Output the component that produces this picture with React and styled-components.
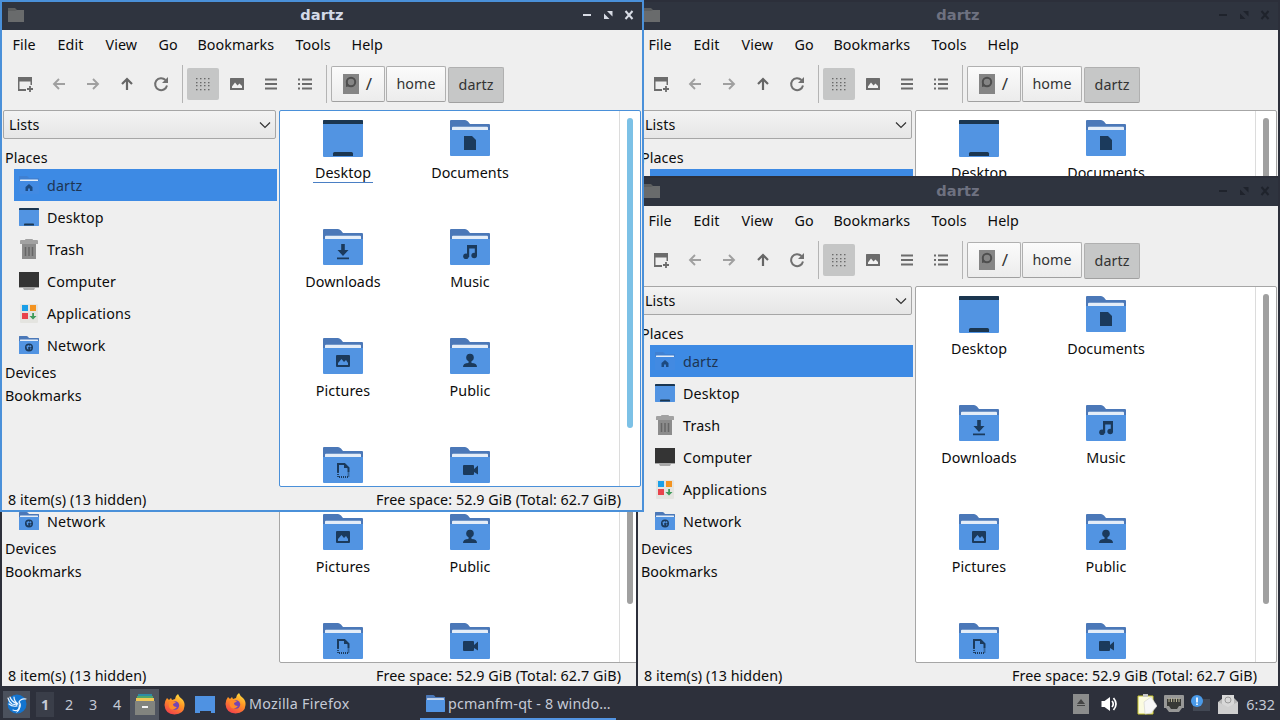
import React from "react";
import styled, { createGlobalStyle } from "styled-components";

const menus = [
  { name: "File", width: 45 },
  { name: "Edit", width: 48 },
  { name: "View", width: 53 },
  { name: "Go", width: 39 },
  { name: "Bookmarks", width: 98 },
  { name: "Tools", width: 56 },
  { name: "Help", width: 50 },
];

const places = ["dartz", "Desktop", "Trash", "Computer", "Applications", "Network"];

// the last row is scrolled half out of view, only its icons are reached
const files = [
  { icon: "Desktop", label: "Desktop" },
  { icon: "Documents", label: "Documents" },
  { icon: "Downloads", label: "Downloads" },
  { icon: "Music", label: "Music" },
  { icon: "Pictures", label: "Pictures" },
  { icon: "Public", label: "Public" },
  { icon: "Templates" },
  { icon: "Videos" },
];

const windows = [
  { id: 1, x: 636, y: 0 },
  { id: 2, x: 0, y: 176 },
  { id: 3, x: 636, y: 176 },
  { id: 4, x: 0, y: 0, active: true },
];

const App = () => {
  return (
    <Screen>
      <GlobalStyle />
      {windows.map((win) => (
        <FileWindow key={win.id} {...win} />
      ))}
      <Taskbar />
    </Screen>
  );
};

const FileWindow = ({ x, y, active }) => (
  <WindowFrame $x={x} $y={y} $active={active}>
    <TitleBar>
      <TitleFolder />
      <Title $active={active}>dartz</Title>
      <WindowButtons active={active} />
    </TitleBar>
    <MenuBar>
      {menus.map((menu) => (
        <MenuItem key={menu.name} $width={menu.width}>
          {menu.name}
        </MenuItem>
      ))}
    </MenuBar>
    <Toolbar>
      {["newtab", "back", "forward", "up", "reload"].map((name) => (
        <ToolButton key={name}>
          <ToolIcon name={name} />
        </ToolButton>
      ))}
      <Separator />
      {["grid", "image", "compact", "list"].map((name) => (
        <ToolButton key={name} $checked={name === "grid"}>
          <ToolIcon name={name} />
        </ToolButton>
      ))}
      <Separator />
      <PathBar>
        <PathButton $width={54}>
          <DriveIcon />
          <Slash>/</Slash>
        </PathButton>
        <PathButton $width={60}>home</PathButton>
        <PathButton $width={56} $checked>
          dartz
        </PathButton>
      </PathBar>
    </Toolbar>
    <Body>
      <Sidebar>
        <Select>
          Lists
          <svg width="12" height="8" viewBox="0 0 12 8">
            <path d="M1 1.5l5 5 5-5" fill="none" stroke="#333" strokeWidth="1.2" />
          </svg>
        </Select>
        <Group $top={7}>Places</Group>
        {places.map((place) => (
          <Place key={place} $selected={place === "dartz"}>
            <PlaceIcon name={place} />
            {place}
          </Place>
        ))}
        <Group>Devices</Group>
        <Group>Bookmarks</Group>
      </Sidebar>
      <FileView $active={active}>
        <FileGrid>
          {files.map((file) => (
            <File key={file.icon}>
              <FileIcon name={file.icon} />
              {file.label && (
                <FileName $current={active && file.label === "Desktop"}>{file.label}</FileName>
              )}
            </File>
          ))}
        </FileGrid>
        <ScrollTrack>
          <ScrollThumb $active={active} />
        </ScrollTrack>
      </FileView>
    </Body>
    <StatusBar>
      <StatusText>8 item(s) (13 hidden)</StatusText>
      <StatusText>Free space: 52.9 GiB (Total: 62.7 GiB)</StatusText>
    </StatusBar>
  </WindowFrame>
);

const TitleFolder = () => (
  <svg width="16" height="14" viewBox="0 0 16 14">
    <path d="M0 0h7l2 2h7v12H0z" fill="#5c5e5f" />
    <path d="M0 3h7l2-1h7v12H0z" fill="#696b6c" />
  </svg>
);

const WindowButtons = ({ active }) => {
  const color = active ? "#d8dce5" : "#1f232c";
  return (
    <svg width="52" height="12" viewBox="0 0 52 12">
      <path d="M0 6h8" stroke={color} strokeWidth="2" />
      <path d="M24 2h5.500v5.500zM21 4.500l5.500 5.500H21z" fill={color} />
      <path d="M42.500 2l7 8M49.500 2l-7 8" stroke={color} strokeWidth="2" />
    </svg>
  );
};

const ToolIcon = ({ name }) => {
  const shapes = {
    newtab: (
      <>
        <path d="M1 1h14v8h-1.500V5.500h-11V13H9v2H1z" fill="#6c6c6c" />
        <path d="M13 10v6M10 13h6" stroke="#6c6c6c" strokeWidth="1.8" />
      </>
    ),
    back: <path d="M14 8H3M8 3L3 8l5 5" fill="none" stroke="#a0a0a0" strokeWidth="1.900" />,
    forward: <path d="M2 8h11M8 3l5 5-5 5" fill="none" stroke="#a0a0a0" strokeWidth="1.900" />,
    up: <path d="M8 14V3M3 8l5-5 5 5" fill="none" stroke="#666" strokeWidth="2.200" />,
    reload: (
      <>
        <path d="M12.500 4A6 6 0 1 0 14 9.500" fill="none" stroke="#707070" strokeWidth="2" />
        <path d="M15 1v6H9z" fill="#707070" />
      </>
    ),
    grid: (
      <g fill="#6a6a6a">
        {[2, 6, 9, 13].map((y) =>
          [1, 5, 9, 13].map((x) => <rect key={`${x}-${y}`} x={x} y={y} width="1.500" height="1.300" />)
        )}
      </g>
    ),
    image: (
      <>
        <rect x="1" y="2" width="14" height="12" rx="0.5" fill="#6c6c6c" />
        <path d="M3 12V10.500L6 6.500l2.500 3 2-2L13 10v2z" fill="#f2f2f2" />
      </>
    ),
    compact: <path d="M2 3.500h12M2 8h12M2 12.500h12" stroke="#6c6c6c" strokeWidth="2" />,
    list: <path d="M1 3.500h2M5 3.500h10M1 8h2M5 8h10M1 12.500h2M5 12.500h10" stroke="#6c6c6c" strokeWidth="1.800" />,
  };
  return (
    <svg width="16" height="16" viewBox="0 0 16 16">
      {shapes[name]}
    </svg>
  );
};

const DriveIcon = () => (
  <svg width="16" height="20" viewBox="0 0 16 20">
    <rect width="16" height="20" fill="#858585" />
    <circle cx="8" cy="8" r="4.200" fill="none" stroke="#4e4e4e" strokeWidth="2" />
    <path d="M3 8v5l4-1" fill="#4e4e4e" />
  </svg>
);

const glyphs = {
  Documents: <path d="M14 16h8l4 4v10H14z" />,
  Downloads: <path d="M18.200 15h3.600v6h3.700L20 27l-5.500-6h3.700zM14 28.500h12v1.800H14z" />,
  Music: (
    <>
      <path d="M17 16h10v11h-2.200v-7.500h-5.600V28H17z" />
      <circle cx="16" cy="27.200" r="2.800" />
      <circle cx="24.200" cy="26.500" r="2.800" />
    </>
  ),
  Pictures: (
    <path fillRule="evenodd" d="M14 17h12q1 0 1 1v10q0 1-1 1H14q-1 0-1-1V18q0-1 1-1zM15 27h10v-2l-2-3-2 2-2.500-3-3.500 4z" />
  ),
  Public: (
    <>
      <circle cx="20" cy="19.500" r="3.800" />
      <path d="M18.500 22h3v3q5.500 0 5.500 4H13q0-4 5.500-4z" />
    </>
  ),
  Templates: (
    <>
      <path d="M15 25v-8h6.500l4 4v4" fill="none" stroke="#1b3a5c" strokeWidth="2" />
      <path d="M21 16l5 5h-5z" />
      <path d="M15 25v5h10.500v-5" fill="none" stroke="#1b3a5c" strokeWidth="1.800" strokeDasharray="1 1" />
    </>
  ),
  Videos: <path d="M14 18h9q1 0 1 1v3l4-3.500v9L24 25v2q0 1-1 1h-9q-1 0-1-1v-8q0-1 1-1z" />,
  Network: (
    <>
      <circle cx="20" cy="23" r="8" />
      <path d="M15 20l5-2 1 3-3 2 1 4-3-1zM22 18l3 2-1 3-3-1zM22 25l3-1-2 4z" fill="#5294e2" />
    </>
  ),
  dartz: <path d="M20 16l7 6v8h-5v-5h-4v5h-5v-8z" />,
};

const Folder = ({ name, width = 40, height = 36 }) => (
  <svg width={width} height={height} viewBox="0 0 40 36" preserveAspectRatio="none">
    <path
      d="M1 0h14q1.500 0 3 1.500L20 4h19q1 0 1 1v12H0V1q0-1 1-1z"
      fill={name === "dartz" ? "#3f80d2" : "#4b78b8"}
    />
    <path d="M3 6.800h34q1 0 1 1V14H2V7.800q0-1 1-1z" fill="#e4edf8" />
    <path d="M0 10h40V35q0 1-1 1H1q-1 0-1-1z" fill={name === "dartz" ? "#428ae2" : "#5294e2"} />
    <g fill={name === "dartz" ? "#1d4a80" : "#1b3a5c"}>{glyphs[name]}</g>
  </svg>
);

const DesktopIcon = ({ width = 40, height = 37 }) => (
  <svg width={width} height={height} viewBox="0 0 40 37" preserveAspectRatio="none">
    <path d="M1 0h38q1 0 1 1v35q0 1-1 1H1q-1 0-1-1V1q0-1 1-1z" fill="#5294e2" />
    <path d="M1 0h38q1 0 1 1v3H0V1q0-1 1-1z" fill="#1b3650" />
    <path d="M10 36v-2.500q0-1.500 1.500-1.500h17q1.500 0 1.500 1.500V36z" fill="#1b3650" />
  </svg>
);

const FileIcon = ({ name }) => (name === "Desktop" ? <DesktopIcon /> : <Folder name={name} />);

const PlaceIcon = ({ name }) => {
  if (name === "dartz" || name === "Network") {
    return <Folder name={name} width={20} height={18} />;
  }
  if (name === "Desktop") {
    return <DesktopIcon width={20} height={18} />;
  }
  if (name === "Trash") {
    return (
      <svg width="20" height="20" viewBox="0 0 20 20">
        <path d="M2 1h4q0-1 1-1h6q1 0 1 1h4q1 0 1 1v3H1V2q0-1 1-1z" fill="#a2a2a2" />
        <path d="M3 5h14v15H3z" fill="#8c8c8c" />
        <path d="M6.500 8v9M10 8v9M13.500 8v9" stroke="#666" strokeWidth="1.500" />
      </svg>
    );
  }
  if (name === "Computer") {
    return (
      <svg width="20" height="18" viewBox="0 0 20 18">
        <path d="M0 14h20v2h-4l-1 2H5l-1-2H0z" fill="#a8a8a8" />
        <path d="M0 0h20v15H0z" fill="#343434" />
      </svg>
    );
  }
  return (
    <svg width="20" height="20" viewBox="0 0 20 20">
      <rect x="1" y="1" width="18" height="19" rx="1" fill="#e4e4e0" />
      <path d="M3 2h6v6H3z" fill="#1a9fe8" />
      <path d="M11 2h6v6h-6z" fill="#f39321" />
      <path d="M3 10h6v6H3z" fill="#e8434c" />
      <path d="M13.200 10h1.800v3h2.500L14 16.500 10.500 13h2.700z" fill="#3e9b5b" />
    </svg>
  );
};

const FirefoxIcon = () => (
  <svg width="21" height="21" viewBox="0 0 21 21">
    <defs>
      <linearGradient id="fox" x1="0.800" y1="0" x2="0.300" y2="1">
        <stop offset="0" stopColor="#ffe343" />
        <stop offset="0.450" stopColor="#ff9524" />
        <stop offset="1" stopColor="#f2404c" />
      </linearGradient>
    </defs>
    <path
      d="M3 4l2 2 2-2 1 2 3-1q0-3 3-5 1 3 4 5 3 3 2.500 7Q20 20 10.500 20.500 1 20 .5 11 .500 7 3 4z"
      fill="url(#fox)"
    />
    <circle cx="11" cy="11.500" r="4.200" fill="#7446b3" />
    <path d="M5 8q3-2 7 .5l-3 1.500q0 3 4 3-3 4-7 1.500Q4 12 5 8z" fill="#ff8a2a" />
  </svg>
);

const Taskbar = () => (
  <Panel>
    <StartButton>
      <svg width="20" height="22" viewBox="0 0 20 22">
        <circle cx="10" cy="11" r="9.500" fill="#1374cf" />
        <path
          d="M1 5q1 4 4 6l5 1M3 4q1 4 7 7M7 4q0 4 4 7M2 11q3 3 8 2M6 17q5 2 7-3 1-3-1-5 2-4 7-3"
          fill="none"
          stroke="#e9f4ff"
          strokeWidth="1.200"
          strokeLinecap="round"
        />
        <path d="M9 20q5-3 4-8l-1-1q0 5-3 9z" fill="#e9f4ff" />
      </svg>
    </StartButton>
    <Pager>
      {[1, 2, 3, 4].map((n) => (
        <Workspace key={n} $current={n === 1}>
          {n}
        </Workspace>
      ))}
    </Pager>
    <Launcher $open>
      <svg width="20" height="21" viewBox="0 0 20 21">
        <path d="M3 0h14v4H3z" fill="#2e8ba5" />
        <path d="M2 2h16v4H2z" fill="#52a56a" />
        <path d="M1 4h18v4H1z" fill="#f0c657" />
        <path d="M0 7h20v14H0z" fill="#82847f" />
        <rect x="7" y="12" width="6" height="2" fill="#f4f4f4" />
      </svg>
    </Launcher>
    <Launcher>
      <FirefoxIcon />
    </Launcher>
    <Launcher>
      <svg width="20" height="17" viewBox="0 0 20 17">
        <path d="M0 0h20v17h-4v-2H5v2H0z" fill="#4f92e2" />
      </svg>
    </Launcher>
    <Task $width={190}>
      <FirefoxIcon />
      <TaskName $spacing={0.26}>Mozilla Firefox</TaskName>
    </Task>
    <Task $width={196} $active>
      <Folder width={19} height={17} />
      <TaskName $spacing={0.17}>pcmanfm-qt - 8 windo…</TaskName>
    </Task>
    <Tray>
      <TrayItem $right={12}>
        <svg width="16" height="20" viewBox="0 0 16 20">
          <rect width="16" height="20" fill="#8b8c8c" />
          <path d="M8 5l4 5H4zM4 11h8v1H4z" fill="#444" />
        </svg>
      </TrayItem>
      <TrayItem $right={18}>
        <svg width="18" height="16" viewBox="0 0 18 16">
          <path d="M0.500 5h3L9 1v14l-5.500-4h-3z" fill="#fff" />
          <path d="M11 5q2.500 3 0 6M12.500 2q5 6 0 12" fill="none" stroke="#fff" strokeWidth="1.700" />
        </svg>
      </TrayItem>
      <TrayItem>
        <svg width="20" height="21" viewBox="0 0 20 21">
          <path d="M1 2h15v18H1z" fill="#fbfbe0" stroke="#c9c52f" />
          <path d="M6 0h5v3H6z" fill="#c6c6c6" />
          <path d="M7 8l7-5 6 9-6 7-6 1z" fill="#f7f7f7" stroke="#d6d6d2" strokeWidth="0.700" />
        </svg>
      </TrayItem>
      <TrayItem>
        <svg width="20" height="18" viewBox="0 0 20 18">
          <path d="M1 0h18q1 0 1 1v12h-2l-3 4H5l-3-4H0V1q0-1 1-1z" fill="#989897" />
          <path d="M3 4h14v7h-2l-2 3H7l-2-3H3z" fill="#383936" />
          <path d="M5 3v4M7.500 3v4M10 3v4M12.500 3v4M15 3v4" stroke="#b8b395" strokeWidth="1" />
        </svg>
      </TrayItem>
      <TrayItem>
        <svg width="20" height="18" viewBox="0 0 20 18">
          <rect x="2" y="4" width="17" height="12" fill="#424854" />
          <circle cx="6" cy="6" r="6" fill="#4a9ae8" />
          <path d="M6 2.500v5M6 8.500v1.500" stroke="#fff" strokeWidth="1.700" />
        </svg>
      </TrayItem>
      <TrayItem $right={8}>
        <svg width="20" height="21" viewBox="0 0 20 21">
          <path d="M0 8l5-4V1h11v3l4 4v12H0z" fill="#b5b5b5" />
          <path d="M4 1h12v9l-6 5-6-5z" fill="#d8d8d8" />
          <circle cx="10" cy="6" r="3" fill="none" stroke="#999" />
          <path d="M0 8l10 5 10-5v12H0z" fill="#cfcfcf" />
        </svg>
      </TrayItem>
      <Clock>6:32</Clock>
    </Tray>
  </Panel>
);

const GlobalStyle = createGlobalStyle`
  * {
    box-sizing: border-box;
  }
  body {
    margin: 0;
    overflow: hidden;
    font-family: "Noto Sans", sans-serif;
    font-size: 14.3px;
    letter-spacing: 0.07px;
    color: #0c0c0c;
  }
  svg {
    display: block;
    flex-shrink: 0;
  }
`;

const Screen = styled.div`
  position: relative;
  width: 1280px;
  height: 720px;
  overflow: hidden;
  display: flex;
  flex-direction: column;
  justify-content: flex-end;
  background-color: #2d303b;
`;

const WindowFrame = styled.div`
  position: absolute;
  left: ${({ $x }) => $x}px;
  top: ${({ $y }) => $y}px;
  width: 644px;
  height: 512px;
  display: flex;
  flex-direction: column;
  border: 2px solid ${({ $active }) => ($active ? "#4a90d9" : "#2c2f3a")};
  background-color: #efefef;
`;

const TitleBar = styled.div`
  flex: none;
  height: 28px;
  display: flex;
  align-items: center;
  justify-content: space-between;
  padding: 0 7px 2px 6px;
  background-color: #2f343f;
`;

const Title = styled.div`
  margin: -1px 0 0 37px;
  font-family: "DejaVu Sans", sans-serif;
  font-size: 14.6px;
  font-weight: bold;
  color: ${({ $active }) => ($active ? "#d3dae8" : "#6e7180")};
`;

const MenuBar = styled.div`
  flex: none;
  height: 30px;
  display: flex;
  align-items: center;
  padding: 0 0 2px 10.5px;
`;

const MenuItem = styled.div`
  width: ${({ $width }) => $width}px;
  white-space: nowrap;
`;

const Toolbar = styled.div`
  flex: none;
  height: 50px;
  display: flex;
  align-items: center;
  gap: 2px;
  padding: 0 0 2px 7px;
`;

const ToolButton = styled.div`
  width: 32px;
  height: 32px;
  display: flex;
  align-items: center;
  justify-content: center;
  border-radius: 2px;
  background-color: ${({ $checked }) => ($checked ? "#c5c6c6" : "transparent")};
`;

const Separator = styled.div`
  width: 1px;
  height: 38px;
  margin: 0 2px 0 3px;
  background-color: #b4b4b4;
`;

const PathBar = styled.div`
  display: flex;
  gap: 2px;
`;

const PathButton = styled.div`
  width: ${({ $width }) => $width}px;
  height: 36px;
  display: flex;
  align-items: center;
  justify-content: center;
  gap: 7px;
  margin-top: ${({ $checked }) => ($checked ? 1 : 0)}px;
  margin-left: ${({ $checked }) => ($checked ? 0 : -0.5)}px;
  border: 1px solid #b0b0b0;
  border-bottom-color: #a0a0a0;
  border-radius: 2px;
  color: #333;
  background: ${({ $checked }) => ($checked ? "#c6c7c7" : "linear-gradient(#fbfbfb, #ececec)")};
`;

const Slash = styled.span`
  font-size: 17px;
  line-height: 20px;
`;

const Body = styled.div`
  flex: none;
  height: 377px;
  display: flex;
`;

const Sidebar = styled.div`
  width: 277px;
  padding-left: 1px;
`;

const Select = styled.div`
  width: 273px;
  height: 29px;
  display: flex;
  align-items: center;
  justify-content: space-between;
  padding: 0 4px 0 5px;
  border: 1px solid #a6a6a6;
  border-radius: 2px;
  background: linear-gradient(#f3f3f3, #e6e6e6);
`;

const Group = styled.div`
  height: 23px;
  margin-top: ${({ $top }) => $top || 0}px;
  padding-left: 2px;
  line-height: 23px;
`;

const Place = styled.div`
  height: 32px;
  display: flex;
  align-items: center;
  gap: 8px;
  margin: 0 2px 0 11px;
  padding-left: 5px;
  letter-spacing: 0.15px;
  color: ${({ $selected }) => ($selected ? "#1d3553" : "#0c0c0c")};
  background-color: ${({ $selected }) => ($selected ? "#3d8ae4" : "transparent")};
`;

const FileView = styled.div`
  width: 362px;
  display: flex;
  border: 1px solid ${({ $active }) => ($active ? "#4a90d9" : "#a6a6a6")};
  border-radius: 2px;
  background-color: #fff;
  overflow: hidden;
`;

const FileGrid = styled.div`
  flex: 1;
  display: grid;
  grid-template-columns: 127px 127px;
  grid-auto-rows: 109px;
`;

const File = styled.div`
  display: flex;
  flex-direction: column;
  align-items: center;
  padding: 9px 1px 0 0;

  svg {
    margin-bottom: auto;
  }
`;

const FileName = styled.div`
  height: 19px;
  margin-bottom: 37px;
  padding: 0 2px;
  line-height: 18px;
  border-bottom: 1px solid ${({ $current }) => ($current ? "#4a7fc4" : "transparent")};
`;

const ScrollTrack = styled.div`
  width: 21px;
  padding: 7px 0 0 7px;
  border-left: 1px solid #dcdcdc;
`;

const ScrollThumb = styled.div`
  width: 6px;
  height: 310px;
  border-radius: 3px;
  background-color: ${({ $active }) => ($active ? "#7cc1e6" : "#a0a0a0")};
`;

const StatusBar = styled.div`
  flex: 1;
  display: flex;
  align-items: center;
  justify-content: space-between;
  padding: 2px 21px 0 6px;
`;

const StatusText = styled.div`
  white-space: nowrap;
`;

const Panel = styled.div`
  position: relative;
  height: 34px;
  display: flex;
  align-items: center;
  padding: 2px 5px 0 3px;
  color: #c5cad6;
  background-color: #2d303b;
`;

const StartButton = styled.div`
  width: 27px;
  height: 27px;
  display: flex;
  align-items: center;
  justify-content: center;
  background-color: #4b515d;
`;

const Pager = styled.div`
  display: flex;
  margin: 0 1px 0 3px;
`;

const Workspace = styled.div`
  width: 18px;
  height: 25px;
  margin: 0 3px;
  text-align: center;
  line-height: 25px;
  font-weight: ${({ $current }) => ($current ? "bold" : "normal")};
  background-color: ${({ $current }) => ($current ? "#3a3e49" : "transparent")};
`;

const Launcher = styled.div`
  width: 29px;
  height: 31px;
  margin-right: 1px;
  display: flex;
  align-items: center;
  justify-content: center;
  background-color: ${({ $open }) => ($open ? "#505560" : "transparent")};
`;

const Task = styled.div`
  width: ${({ $width }) => $width}px;
  height: 32px;
  display: flex;
  align-items: center;
  gap: 3px;
  margin-left: 5px;
  padding-left: ${({ $active }) => ($active ? 6 : 0)}px;
  border-bottom: 2px solid ${({ $active }) => ($active ? "#5294e2" : "transparent")};
`;

const TaskName = styled.div`
  white-space: nowrap;
  letter-spacing: ${({ $spacing }) => $spacing}px;
`;

const Tray = styled.div`
  display: flex;
  align-items: center;
  margin-left: auto;
`;

const TrayItem = styled.div`
  margin-right: ${({ $right }) => $right || 7}px;
`;

const Clock = styled.div`
  white-space: nowrap;
`;

export default App;
